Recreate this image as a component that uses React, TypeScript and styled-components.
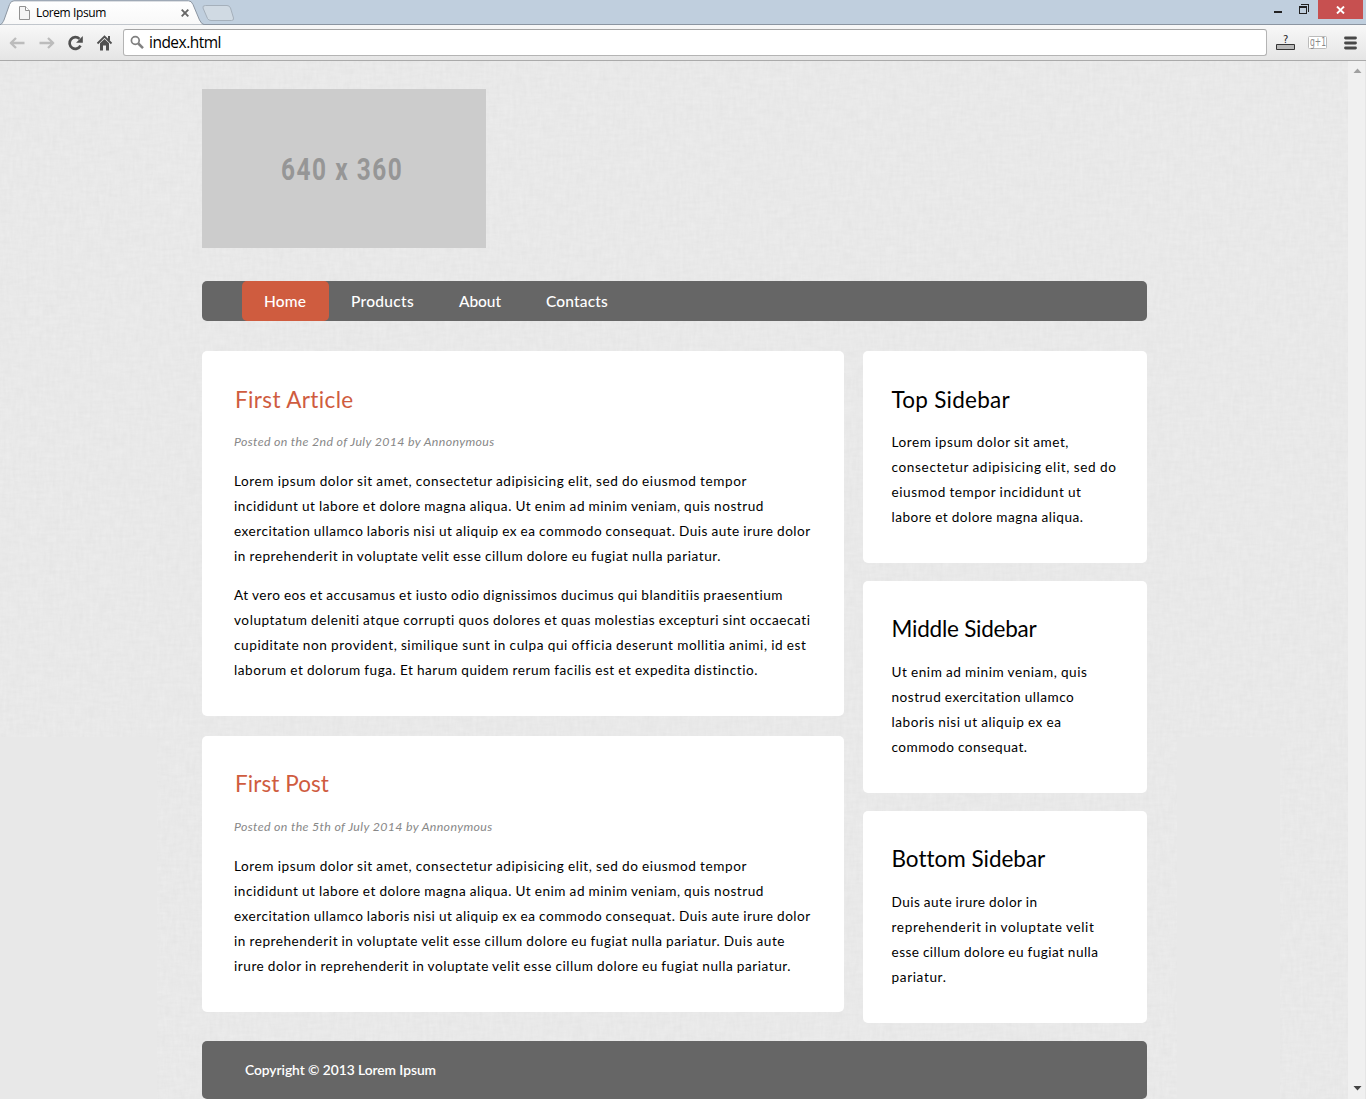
import React, { useLayoutEffect, useRef, useState } from 'react';
import styled, { createGlobalStyle } from 'styled-components';

const GlobalStyle = createGlobalStyle`
  * { box-sizing: border-box; }
  html, body { margin: 0; padding: 0; overflow: hidden; background: #e8e8e8; }
  body { font-family: Lato, "Open Sans", sans-serif; color: #000; }
  h2, p { margin: 0; font-weight: 400; }
`;

const Run = styled.span`
  display: inline-block;
  white-space: nowrap;
`;

/* Tracks a run of text out to a fixed measure. */
function Tracked({ text, width }: { text: string; width: number }) {
  const ref = useRef<HTMLSpanElement>(null);
  const [spacing, setSpacing] = useState(0);
  useLayoutEffect(() => {
    const el = ref.current;
    if (!el) return;
    el.style.letterSpacing = '0px';
    const next = (width - el.getBoundingClientRect().width) / text.length;
    el.style.letterSpacing = `${next}px`;
    setSpacing(next);
  }, [text, width]);
  return <Run ref={ref} style={{ letterSpacing: spacing }}>{text}</Run>;
}

const Window = styled.div`
  width: 1366px;
  height: 1099px;
  display: flex;
  flex-direction: column;
  overflow: hidden;
`;

const TabStrip = styled.div`
  height: 25px;
  flex: none;
  display: flex;
  justify-content: space-between;
  background: #c0cfde;
  border-bottom: 1px solid #8b95a1;
`;

const TabGroup = styled.div`
  position: relative;
  width: 240px;
  height: 25px;
`;

const TabShape = styled.svg`
  position: absolute;
  inset: 0;
  display: block;
`;

const TabContent = styled.div`
  position: relative;
  display: flex;
  align-items: center;
  height: 26px;
  padding-left: 19px;
  font: 12px/26px "Open Sans", sans-serif;
  svg { flex: none; }
`;

const TabTitle = styled.div`
  width: 149px;
  padding-left: 5px;
`;

const WindowButtons = styled.div`
  display: flex;
  height: 19px;
`;

const WindowButton = styled.div<{ $width: number; $danger?: boolean }>`
  width: ${p => p.$width}px;
  display: flex;
  align-items: center;
  justify-content: center;
  background: ${p => (p.$danger ? '#c75050' : 'transparent')};
  margin: 0 ${p => (p.$danger ? 3 : 0)}px 0 ${p => (p.$danger ? 2 : 0)}px;
`;

const Toolbar = styled.div`
  height: 36px;
  flex: none;
  display: flex;
  align-items: center;
  background: linear-gradient(#f8f8f8, #e5e5e5);
  border-bottom: 1px solid #aaa;
  svg { flex: none; display: block; }
`;

const AddressBar = styled.div`
  width: 1144px;
  height: 27px;
  margin: 0 8px 0 2px;
  padding-left: 6px;
  display: flex;
  align-items: center;
  background: #fff;
  border: 1px solid #b4b4b4;
  border-top-color: #a4a4a4;
  border-radius: 3px;
  font: 15.5px/25px "Open Sans", sans-serif;
`;

const Url = styled.div`
  padding-left: 4px;
`;

const Viewport = styled.div`
  position: relative;
  flex: 1;
  min-height: 0;
  display: flex;
  background: #e8e8e8;
`;

const Linen = styled.svg`
  position: absolute;
  left: 0;
  top: 0;
`;

const Page = styled.div`
  position: relative;
  width: 1348px;
  padding: 28px 201px 0 202px;
`;

const Banner = styled.svg`
  display: block;
  background: #ccc;
`;

const Nav = styled.nav`
  display: flex;
  height: 40px;
  margin-top: 33px;
  padding-left: 40px;
  background: #666;
  border-radius: 5px;
`;

const NavItem = styled.a<{ $active?: boolean }>`
  padding: 0 23px 0 22px;
  border-radius: 5px;
  background: ${p => (p.$active ? '#cf5c3f' : 'transparent')};
  color: #fff;
  font-size: 15.5px;
  font-weight: 500;
  line-height: 41px;
`;

const Columns = styled.div`
  display: flex;
  justify-content: space-between;
  align-items: flex-start;
  margin-top: 30px;
`;

const Column = styled.div<{ $width: number; $gap: number }>`
  display: flex;
  flex-direction: column;
  gap: ${p => p.$gap}px;
  width: ${p => p.$width}px;
`;

const Card = styled.section<{ $inset: number }>`
  padding: 33px 0 33px ${p => p.$inset}px;
  background: #fff;
  border-radius: 5px;
`;

const Title = styled.h2<{ $accent?: boolean; $below: number; $lift?: number }>`
  margin-top: ${p => -(p.$lift ?? 0)}px;
  margin-bottom: ${p => p.$below + (p.$lift ?? 0)}px;
  padding-left: ${p => (p.$accent ? 1 : 0)}px;
  color: ${p => (p.$accent ? '#cf5c3f' : '#000')};
  font-size: 22.5px;
  line-height: 32px;
`;

const Meta = styled.p`
  margin-bottom: 14px;
  color: #888;
  font-size: 12.4px;
  font-style: italic;
  line-height: 26px;
`;

const Paragraph = styled.p`
  font-size: 13.6px;
  line-height: 25px;
  word-spacing: -0.5px;
  & + & { margin-top: 14px; }
`;

const Line = styled.span`
  display: block;
  height: 25px;
`;

const Footer = styled.footer`
  height: 58px;
  margin-top: 18px;
  padding-left: 43px;
  background: #666;
  border-radius: 5px;
  color: #fff;
  font-size: 13.8px;
  font-weight: 600;
  line-height: 58px;
`;

const Scrollbar = styled.div`
  position: relative;
  width: 18px;
  padding: 7px 0 8px 5px;
  display: flex;
  flex-direction: column;
  justify-content: space-between;
  background: #f0f0f0;
  border-right: 1px solid #e6e6e6;
`;

type TextLine = [string, number];

const navItems: TextLine[] = [['Home', 42], ['Products', 63], ['About', 42], ['Contacts', 62]];

const posts: { title: TextLine; meta: TextLine; lift: number; body: TextLine[][] }[] = [
  {
    title: ['First Article', 119],
    meta: ['Posted on the 2nd of July 2014 by Annonymous', 260.5],
    lift: 0,
    body: [
      [
        ['Lorem ipsum dolor sit amet, consectetur adipisicing elit, sed do eiusmod tempor', 513],
        ['incididunt ut labore et dolore magna aliqua. Ut enim ad minim veniam, quis nostrud', 530],
        ['exercitation ullamco laboris nisi ut aliquip ex ea commodo consequat. Duis aute irure dolor', 577],
        ['in reprehenderit in voluptate velit esse cillum dolore eu fugiat nulla pariatur.', 487],
      ],
      [
        ['At vero eos et accusamus et iusto odio dignissimos ducimus qui blanditiis praesentium', 549.5],
        ['voluptatum deleniti atque corrupti quos dolores et quas molestias excepturi sint occaecati', 577.5],
        ['cupiditate non provident, similique sunt in culpa qui officia deserunt mollitia animi, id est', 572],
        ['laborum et dolorum fuga. Et harum quidem rerum facilis est et expedita distinctio.', 524.5],
      ],
    ],
  },
  {
    title: ['First Post', 94],
    meta: ['Posted on the 5th of July 2014 by Annonymous', 258.5],
    lift: 1,
    body: [
      [
        ['Lorem ipsum dolor sit amet, consectetur adipisicing elit, sed do eiusmod tempor', 513],
        ['incididunt ut labore et dolore magna aliqua. Ut enim ad minim veniam, quis nostrud', 530],
        ['exercitation ullamco laboris nisi ut aliquip ex ea commodo consequat. Duis aute irure dolor', 577],
        ['in reprehenderit in voluptate velit esse cillum dolore eu fugiat nulla pariatur. Duis aute', 551],
        ['irure dolor in reprehenderit in voluptate velit esse cillum dolore eu fugiat nulla pariatur.', 557],
      ],
    ],
  },
];

const sidebars: { title: TextLine; lift: number; body: TextLine[] }[] = [
  {
    title: ['Top Sidebar', 118.5],
    lift: 0.5,
    body: [
      ['Lorem ipsum dolor sit amet,', 177.5],
      ['consectetur adipisicing elit, sed do', 225],
      ['eiusmod tempor incididunt ut', 190],
      ['labore et dolore magna aliqua.', 192],
    ],
  },
  {
    title: ['Middle Sidebar', 145],
    lift: 1,
    body: [
      ['Ut enim ad minim veniam, quis', 196],
      ['nostrud exercitation ullamco', 183],
      ['laboris nisi ut aliquip ex ea', 170],
      ['commodo consequat.', 136],
    ],
  },
  {
    title: ['Bottom Sidebar', 153],
    lift: 1,
    body: [
      ['Duis aute irure dolor in', 146],
      ['reprehenderit in voluptate velit', 203],
      ['esse cillum dolore eu fugiat nulla', 207],
      ['pariatur.', 55],
    ],
  },
];

function Lines({ lines }: { lines: TextLine[] }) {
  return (
    <Paragraph>
      {lines.map(([text, width]) => (
        <Line key={text}><Tracked text={text} width={width} /></Line>
      ))}
    </Paragraph>
  );
}

function BrowserTabs() {
  return (
    <TabStrip>
      <TabGroup>
        <TabShape width="240" height="25" viewBox="0 0 240 25">
          <defs>
            <linearGradient id="tab" x1="0" y1="0" x2="0" y2="1">
              <stop offset="0" stopColor="#fff" />
              <stop offset="1" stopColor="#f8f8f8" />
            </linearGradient>
          </defs>
          <path d="M0 25C2 24 3 22 4 20L9.500 4.500Q10.800 .8 14 .8H188.500Q191.500 .8 193 4.500L199.500 20Q201.500 24.500 205 25Z" fill="url(#tab)" stroke="#8b95a1" />
          <path d="M205.500 5.500H227Q229.500 5.500 230.500 8L233.500 18Q234 20.500 231.500 20.500H211Q208.500 20.500 207.500 18.500L203 8Q202.300 5.500 205.500 5.500Z" fill="#d0dae3" stroke="#a5b0bb" />
        </TabShape>
        <TabContent>
          <svg width="12" height="14" viewBox="0 0 12 14">
            <path d="M.5 .5H6.500L10.500 4.500V13.500H.5Z" fill="#f5f5f5" stroke="#929292" />
            <path d="M6.500 .5V4.500H10.500" fill="#fff" stroke="#929292" />
          </svg>
          <TabTitle><Tracked text="Lorem Ipsum" width={70} /></TabTitle>
          <svg width="10" height="10" viewBox="0 0 10 10">
            <path d="M1.700 1.700L8.300 8.300M8.300 1.700L1.700 8.300" stroke="#666" strokeWidth="1.900" />
          </svg>
        </TabContent>
      </TabGroup>
      <WindowButtons>
        <WindowButton $width={26}>
          <svg width="8" height="14"><path d="M0 8H8V10H0Z" fill="#222" /></svg>
        </WindowButton>
        <WindowButton $width={25}>
          <svg width="12" height="14" viewBox="0 0 12 14" shapeRendering="crispEdges">
            <path d="M3 1.500H10.500V8.500" fill="none" stroke="#222" />
            <path d="M1.500 4.500H8.500V10.500H1.500Z" fill="none" stroke="#222" />
            <path d="M1 3H9V5H1Z" fill="#222" />
          </svg>
        </WindowButton>
        <WindowButton $width={45} $danger>
          <svg width="9" height="8" viewBox="0 0 9 8">
            <path d="M1 .5L8 7.500M8 .5L1 7.500" stroke="#fff" strokeWidth="1.900" />
          </svg>
        </WindowButton>
      </WindowButtons>
    </TabStrip>
  );
}

function BrowserToolbar() {
  return (
    <Toolbar>
      <svg width="121" height="34" viewBox="0 25 121 34">
        <g fill="none" stroke="#bcbcbc" strokeWidth="2.300" strokeLinejoin="round">
          <path d="M24.500 42H11.500M16 37L10.800 42L16 47" />
          <path d="M39.500 42H52.500M48 37L53.200 42L48 47" />
        </g>
        <path d="M79.500 37.900A5.800 5.800 0 1 0 80.500 44.700" fill="none" stroke="#505050" strokeWidth="2.700" />
        <path d="M82.800 35V41.700H76.100Z" fill="#505050" />
        <path d="M97.500 42.500L104.500 35.500L111.500 42.500" fill="none" stroke="#505050" strokeWidth="1.800" />
        <path d="M108 35H110V39.500H108ZM100 42.300L104.500 38L109 42.300V49.500H106V44.500H103V49.500H100Z" fill="#505050" />
      </svg>
      <AddressBar>
        <svg width="15" height="15" viewBox="0 0 15 15">
          <circle cx="5.300" cy="5.500" r="3.900" fill="none" stroke="#808080" strokeWidth="1.700" />
          <path d="M8.300 8.500L13 13.200" stroke="#808080" strokeWidth="2.500" />
        </svg>
        <Url><Tracked text="index.html" width={72} /></Url>
      </AddressBar>
      <svg width="91" height="34" viewBox="1275 25 91 34">
        <path d="M1276.500 43.500H1294.500V48.500H1276.500Z" fill="#b8b8b8" stroke="#333" />
        <text x="1283" y="41.500" fontSize="10" fontFamily="DejaVu Sans" fill="#222">?</text>
        <rect x="1308.500" y="35.500" width="18" height="12" rx="1" fill="#fff" stroke="#bbb" />
        <text x="1310" y="45" fontSize="12" fontFamily="DejaVu Sans" fill="#888" textLength="16" lengthAdjust="spacingAndGlyphs">g+1</text>
        <path d="M1345.500 37H1355.500M1345.500 42H1355.500M1345.500 47H1355.500" stroke="#484848" strokeWidth="2.800" strokeLinecap="round" />
      </svg>
    </Toolbar>
  );
}

export default function App() {
  return (
    <Window>
      <GlobalStyle />
      <BrowserTabs />
      <BrowserToolbar />
      <Viewport>
        <Linen width="1348" height="1038">
          <filter id="linen" x="0" y="0" width="100%" height="100%" colorInterpolationFilters="sRGB">
            <feTurbulence type="fractalNoise" baseFrequency="0.07 0.3" numOctaves="3" seed="4" result="weft" />
            <feTurbulence type="fractalNoise" baseFrequency="0.3 0.07" numOctaves="3" seed="9" result="warp" />
            <feComposite in="weft" in2="warp" operator="arithmetic" k2="0.5" k3="0.5" />
            <feColorMatrix values="0.05 0 0 0 0.887  0.05 0 0 0 0.887  0.05 0 0 0 0.887  0 0 0 0 1" />
          </filter>
          <rect width="1348" height="1038" filter="url(#linen)" />
          <rect y="676" width="157" height="362" fill="#e8e8e8" />
          <rect x="1177" y="676" width="103" height="362" fill="#e8e8e8" />
        </Linen>
        <Page>
          <Banner width="284" height="159" viewBox="0 0 284 159">
            <g transform="translate(79 91) scale(.8 1)">
              <text fill="#969696" fontFamily="Roboto" fontSize="30.500" fontWeight="700" textLength="151">640 x 360</text>
            </g>
          </Banner>
          <Nav>
            {navItems.map(([text, width], i) => (
              <NavItem key={text} $active={i === 0}><Tracked text={text} width={width} /></NavItem>
            ))}
          </Nav>
          <Columns>
            <Column $width={642} $gap={20}>
              {posts.map(post => (
                <Card key={post.title[0]} $inset={32}>
                  <Title $accent $below={13} $lift={post.lift}><Tracked text={post.title[0]} width={post.title[1]} /></Title>
                  <Meta><Tracked text={post.meta[0]} width={post.meta[1]} /></Meta>
                  {post.body.map((lines, i) => <Lines key={i} lines={lines} />)}
                </Card>
              ))}
            </Column>
            <Column $width={284} $gap={18}>
              {sidebars.map(bar => (
                <Card key={bar.title[0]} $inset={28.5}>
                  <Title $below={14} $lift={bar.lift}><Tracked text={bar.title[0]} width={bar.title[1]} /></Title>
                  <Lines lines={bar.body} />
                </Card>
              ))}
            </Column>
          </Columns>
          <Footer><Tracked text="Copyright © 2013 Lorem Ipsum" width={191} /></Footer>
        </Page>
        <Scrollbar>
          <svg width="9" height="5"><path d="M.5 5L4.500 .5L8.500 5Z" fill="#a0a0a0" /></svg>
          <svg width="9" height="5"><path d="M.5 0H8.500L4.500 4.500Z" fill="#444" /></svg>
        </Scrollbar>
      </Viewport>
    </Window>
  );
}
